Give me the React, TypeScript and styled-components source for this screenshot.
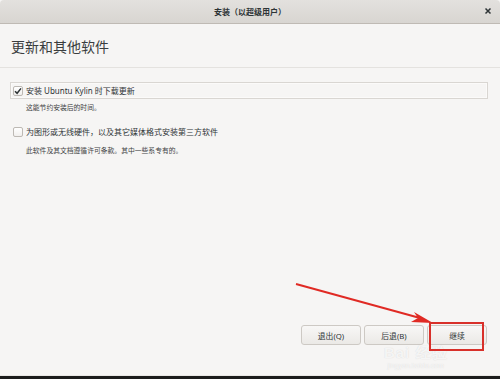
import React from 'react';
import styled, {createGlobalStyle} from 'styled-components';

const GlobalStyle = createGlobalStyle`
    html, body {
        margin: 0;
        padding: 0;
        background: #f6f5f4;
    }
    body {
        font-family: "Noto Sans", "Noto Sans CJK SC", sans-serif;
        color: #2e3436;
    }
`;

const Window = styled.div`
    position: relative;
    width: 500px;
    height: 379px;
    display: flex;
    flex-direction: column;
    background: #f6f5f4;
    overflow: hidden;
`;

const TitleBar = styled.div`
    height: 23px;
    flex: none;
    display: flex;
    align-items: center;
    justify-content: center;
    position: relative;
    background: linear-gradient(#e3e1de, #d8d5d1);
    border-bottom: 1px solid #bfbab4;
    border-radius: 4px 4px 0 0;
    font-family: "Noto Sans CJK SC", sans-serif;
    font-size: 8px;
    font-weight: 700;
    color: #2e3436;
`;

const CloseButton = styled.span`
    position: absolute;
    right: 7px;
    top: 6px;
    width: 10px;
    height: 10px;
    display: flex;
    align-items: center;
    justify-content: center;
`;

const Header = styled.div`
    height: 43px;
    flex: none;
    display: flex;
    align-items: center;
    padding-left: 11px;
    border-bottom: 1px solid #e4e2df;
    font-family: "Noto Sans CJK SC", sans-serif;
    font-size: 14px;
    color: #3a3d3e;
`;

const Content = styled.div`
    flex: 1;
    display: flex;
    flex-direction: column;
    padding: 14px 12px 0 10px;
`;

const OptionRow = styled.label<{focused?: boolean}>`
    height: 17px;
    box-sizing: border-box;
    display: flex;
    align-items: center;
    gap: 3px;
    padding-left: 2px;
    border: 1px solid ${p => p.focused ? '#d9d6d2' : 'transparent'};
    box-shadow: ${p => p.focused ? 'inset 0 0 0 1px #fbfaf9' : 'none'};
    font-family: "Noto Sans", "Noto Sans CJK SC", sans-serif;
    font-size: 8px;
    color: #2e3436;
`;

const Box = styled.span`
    width: 10px;
    height: 10px;
    box-sizing: border-box;
    flex: none;
    display: flex;
    align-items: center;
    justify-content: center;
    border: 1px solid #bdb9b4;
    border-radius: 2px;
    background: linear-gradient(#ffffff, #f1efed);
`;

const Hint = styled.div<{gap: number}>`
    margin: ${p => p.gap}px 0 0 16px;
    font-family: "Noto Sans CJK SC", sans-serif;
    font-size: 6.8px;
    line-height: 10px;
    color: #3f4344;
`;

const Footer = styled.div`
    flex: none;
    display: flex;
    justify-content: flex-end;
    gap: 3px;
    padding: 0 13px 30px 0;
`;

const Button = styled.button`
    width: 60px;
    height: 20px;
    padding: 0;
    border: 1px solid #cdc9c4;
    border-radius: 3px;
    background: linear-gradient(#f8f7f6, #ebe9e6);
    font-family: "Noto Sans", "Noto Sans CJK SC", sans-serif;
    font-size: 7.8px;
    color: #2e3436;
`;

const BottomEdge = styled.div`
    flex: none;
    height: 1px;
    background: #e9e7e4;
    border-bottom: 3px solid #1c1c1c;
`;

const Annotation = styled.svg`
    position: absolute;
    left: 0;
    top: 0;
    pointer-events: none;
`;

const Watermark = styled.div`
    position: absolute;
    left: 384px;
    top: 345px;
    display: flex;
    flex-direction: column;
    align-items: center;
    color: rgba(255, 255, 255, 0.75);
    text-shadow: 0 0 1px rgba(150, 150, 150, 0.35);
    pointer-events: none;
`;

const MarkBig = styled.span`
    font-family: "Liberation Sans", sans-serif;
    font-size: 15px;
    font-weight: 700;
    letter-spacing: 1px;
    line-height: 16px;
`;

const MarkSmall = styled.span`
    font-family: "Liberation Sans", sans-serif;
    font-size: 7px;
    line-height: 9px;
`;

const Check = () => (
    <svg width="8" height="8" viewBox="0 0 8 8">
        <path d="M1 4.2 L3.1 6.3 L7 1.4" fill="none" stroke="#2e3436" strokeWidth="1.5"/>
    </svg>
);

export default function App() {
    return (
        <Window>
            <GlobalStyle/>
            <TitleBar>
                安装（以超级用户）
                <CloseButton>
                    <svg width="8" height="8" viewBox="0 0 8 8">
                        <path d="M1.5 1.5 L6.5 6.5 M6.5 1.5 L1.5 6.5" stroke="#2e3436" strokeWidth="1.5"/>
                    </svg>
                </CloseButton>
            </TitleBar>
            <Header>更新和其他软件</Header>
            <Content>
                <OptionRow focused>
                    <Box><Check/></Box>
                    安装 Ubuntu Kylin 时下载更新
                </OptionRow>
                <Hint gap={3}>这能节约安装后的时间。</Hint>
                <OptionRow style={{marginTop: 11}}>
                    <Box/>
                    为图形或无线硬件，以及其它媒体格式安装第三方软件
                </OptionRow>
                <Hint gap={5}>此软件及其文档遵循许可条款。其中一些系专有的。</Hint>
            </Content>
            <Footer>
                <Button>退出(Q)</Button>
                <Button>后退(B)</Button>
                <Button>继续</Button>
            </Footer>
            <BottomEdge/>
            <Watermark>
                <MarkBig>Bai 经验</MarkBig>
                <MarkSmall>jingyan.baidu.com</MarkSmall>
            </Watermark>
            <Annotation width="500" height="379">
                <path d="M296 284 L420 318" stroke="#e02a24" strokeWidth="2" fill="none"/>
                <path d="M433 323 L414 312 L418 318 L411 322 Z" fill="#e02a24"/>
                <rect x="430" y="323" width="53" height="27" fill="none" stroke="#d8302a" strokeWidth="2"/>
            </Annotation>
        </Window>
    );
}
